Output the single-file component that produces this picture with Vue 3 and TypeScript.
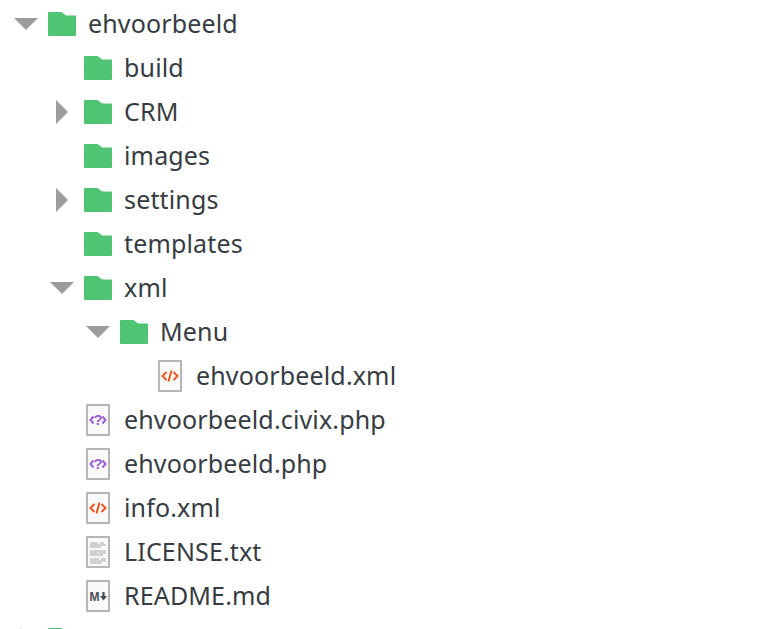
<script setup lang="ts">
type Kind = "folder" | "php" | "xml" | "txt" | "md";
interface Row {
  name: string;
  depth: number;
  kind: Kind;
  arrow?: "open" | "closed";
}

const rows: Row[] = [
  { name: "ehvoorbeeld", depth: 0, kind: "folder", arrow: "open" },
  { name: "build", depth: 1, kind: "folder" },
  { name: "CRM", depth: 1, kind: "folder", arrow: "closed" },
  { name: "images", depth: 1, kind: "folder" },
  { name: "settings", depth: 1, kind: "folder", arrow: "closed" },
  { name: "templates", depth: 1, kind: "folder" },
  { name: "xml", depth: 1, kind: "folder", arrow: "open" },
  { name: "Menu", depth: 2, kind: "folder", arrow: "open" },
  { name: "ehvoorbeeld.xml", depth: 3, kind: "xml" },
  { name: "ehvoorbeeld.civix.php", depth: 1, kind: "php" },
  { name: "ehvoorbeeld.php", depth: 1, kind: "php" },
  { name: "info.xml", depth: 1, kind: "xml" },
  { name: "LICENSE.txt", depth: 1, kind: "txt" },
  { name: "README.md", depth: 1, kind: "md" },
  { name: "files", depth: 0, kind: "folder", arrow: "closed" },
];

const indent = (d: number) => ({ paddingLeft: 14 + d * 36 + "px" });
</script>

<template>
  <div class="tree">
    <div v-for="row in rows" :key="row.name + row.depth" class="row" :style="indent(row.depth)">
      <span class="arrow">
        <svg v-if="row.arrow === 'open'" width="24" height="12" viewBox="0 0 24 12">
          <path d="M0 0H24L12 12Z" fill="#9b9b9b" />
        </svg>
        <svg v-else-if="row.arrow === 'closed'" width="12" height="24" viewBox="0 0 12 24">
          <path d="M0 0L12 12L0 24Z" fill="#9b9b9b" />
        </svg>
      </span>
      <span class="icon">
        <svg v-if="row.kind === 'folder'" width="28" height="24" viewBox="0 0 28 24">
          <path d="M1 0H13.5L18 3.5H27A1 1 0 0 1 28 4.5V23A1 1 0 0 1 27 24H1A1 1 0 0 1 0 23V1A1 1 0 0 1 1 0Z" fill="#4fc472" />
        </svg>
        <svg v-else width="24" height="32" viewBox="0 0 24 32">
          <rect x="1" y="1" width="22" height="30" fill="#f9f9f9" stroke="#b6b6b6" stroke-width="2" />
          <g v-if="row.kind === 'xml'" fill="none" stroke="#e8591e" stroke-width="2">
            <path d="M8.5 12L4.5 16L8.5 20M15.5 12L19.5 16L15.5 20M13.5 10.5L10.5 21.5" />
          </g>
          <g v-else-if="row.kind === 'php'" fill="none" stroke="#9a5fd6" stroke-width="2">
            <path d="M7.5 12.5L4.5 16L7.5 19.5M16.5 12.5L19.5 16L16.5 19.5" />
            <text x="12" y="21" text-anchor="middle" class="glyph" fill="#9a5fd6" stroke="none">?</text>
          </g>
          <g v-else-if="row.kind === 'txt'" fill="none" stroke="#c2c2c2" stroke-width="1.4">
            <path d="M4 7H12M14 7H18M4 9H20M4 11H15" />
            <path d="M4 15H20M4 17H12M13 17H20M4 19H17" />
            <path d="M4 23H13M15 23H20M4 25H20M4 27H16" />
          </g>
          <g v-else>
            <text x="8.5" y="20.5" text-anchor="middle" class="mark" fill="#464c52">M</text>
            <path d="M17.5 12V17" fill="none" stroke="#464c52" stroke-width="2.2" />
            <path d="M14 16H21L17.5 20.5Z" fill="#464c52" />
          </g>
        </svg>
      </span>
      <span class="label">{{ row.name }}</span>
    </div>
  </div>
</template>

<style scoped>
.tree {
  padding-top: 2px;
  height: 627px;
  overflow: hidden;
  background: #fff;
}

.row {
  display: flex;
  align-items: center;
  height: 44px;
}

.arrow {
  display: flex;
  align-items: center;
  justify-content: center;
  flex: none;
  width: 24px;
  margin-right: 10px;
}

.icon {
  display: flex;
  align-items: center;
  justify-content: center;
  flex: none;
  width: 28px;
  margin-right: 12px;
}

.label {
  padding-bottom: 2px;
  font-family: "Noto Sans", "Open Sans", sans-serif;
  font-size: 25px;
  letter-spacing: 0.15px;
  color: #363c42;
  white-space: nowrap;
}

.glyph {
  font-family: "Liberation Sans", sans-serif;
  font-size: 15px;
  font-weight: 700;
}

.mark {
  font-family: "Liberation Sans", sans-serif;
  font-size: 12px;
  font-weight: 700;
}
</style>

<style>
html,
body {
  margin: 0;
  overflow: hidden;
  background: #fff;
}
</style>
